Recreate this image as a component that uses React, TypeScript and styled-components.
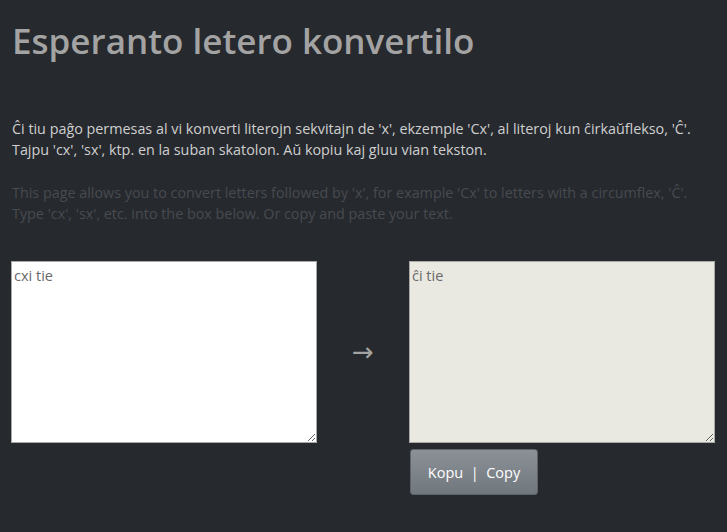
import React, { useState } from "react";
import styled, { createGlobalStyle } from "styled-components";

const GlobalStyle = createGlobalStyle`
  html, body {
    margin: 0;
    padding: 0;
    background: #26292e;
    font-family: "Open Sans", "Noto Sans", sans-serif;
  }
`;

const convert = (text: string) =>
  text
    .replace(/cx/g, "ĉ").replace(/Cx/gi, "Ĉ")
    .replace(/gx/g, "ĝ").replace(/Gx/gi, "Ĝ")
    .replace(/hx/g, "ĥ").replace(/Hx/gi, "Ĥ")
    .replace(/jx/g, "ĵ").replace(/Jx/gi, "Ĵ")
    .replace(/sx/g, "ŝ").replace(/Sx/gi, "Ŝ")
    .replace(/ux/g, "ŭ").replace(/Ux/gi, "Ŭ");

const App = () => {
  const [text, setText] = useState("cxi tie");

  return (
    <Page>
      <GlobalStyle />
      <Title>Esperanto letero konvertilo</Title>
      <Intro>
        Ĉi tiu paĝo permesas al vi konverti literojn sekvitajn de 'x', ekzemple 'Cx', al literoj kun
        ĉirkaŭflekso, 'Ĉ'. Tajpu 'cx', 'sx', ktp. en la suban skatolon. Aŭ kopiu kaj gluu vian tekston.
      </Intro>
      <Intro muted>
        This page allows you to convert letters followed by 'x', for example 'Cx' to letters with a
        circumflex, 'Ĉ'. Type 'cx', 'sx', etc. into the box below. Or copy and paste your text.
      </Intro>
      <Converter>
        <Column>
          <TextBox value={text} onChange={(e) => setText(e.target.value)} />
        </Column>
        <Arrow>→</Arrow>
        <Column>
          <TextBox readOnly output value={convert(text)} />
          <CopyButton>Kopu &nbsp;|&nbsp; Copy</CopyButton>
        </Column>
      </Converter>
    </Page>
  );
};

export default App;

const Page = styled.div`
  padding: 0 11px;
`;

const Title = styled.h1`
  margin: 0;
  padding-top: 18px;
  padding-left: 1px;
  font-size: 35px;
  font-weight: 600;
  color: #a3a3a3;
  line-height: 46px;
`;

const Intro = styled.p<{ muted?: boolean }>`
  margin: ${(p) => (p.muted ? "22px 0 0" : "54px 0 0")};
  padding-left: 1px;
  width: 700px;
  font-size: 14.35px;
  line-height: 21px;
  color: ${(p) => (p.muted ? "#484b50" : "#cfcfcf")};
`;

const Converter = styled.div`
  display: flex;
  align-items: flex-start;
  margin-top: 37px;
`;

const Column = styled.div`
  display: flex;
  flex-direction: column;
  align-items: flex-start;
`;

const TextBox = styled.textarea<{ output?: boolean }>`
  box-sizing: border-box;
  width: 306px;
  height: 182px;
  margin: 0;
  padding: 4px 2px;
  border: 1px solid #a9a9a9;
  background: ${(p) => (p.output ? "#e9e8e1" : "#ffffff")};
  color: #6a6a6a;
  font-family: "Open Sans", sans-serif;
  font-size: 14.5px;
  line-height: 20px;
  outline: none;
`;

const Arrow = styled.div`
  width: 92px;
  height: 182px;
  display: flex;
  align-items: center;
  justify-content: center;
  color: #a3a3a3;
  font-size: 26px;
  font-family: "DejaVu Sans", sans-serif;
`;

const CopyButton = styled.button`
  margin-top: 6px;
  margin-left: 1px;
  width: 128px;
  height: 46px;
  border: 1px solid #5d6369;
  border-radius: 3px;
  background: linear-gradient(#8b9197, #70777d);
  color: #ffffff;
  font-family: "Open Sans", sans-serif;
  font-size: 14.5px;
`;
